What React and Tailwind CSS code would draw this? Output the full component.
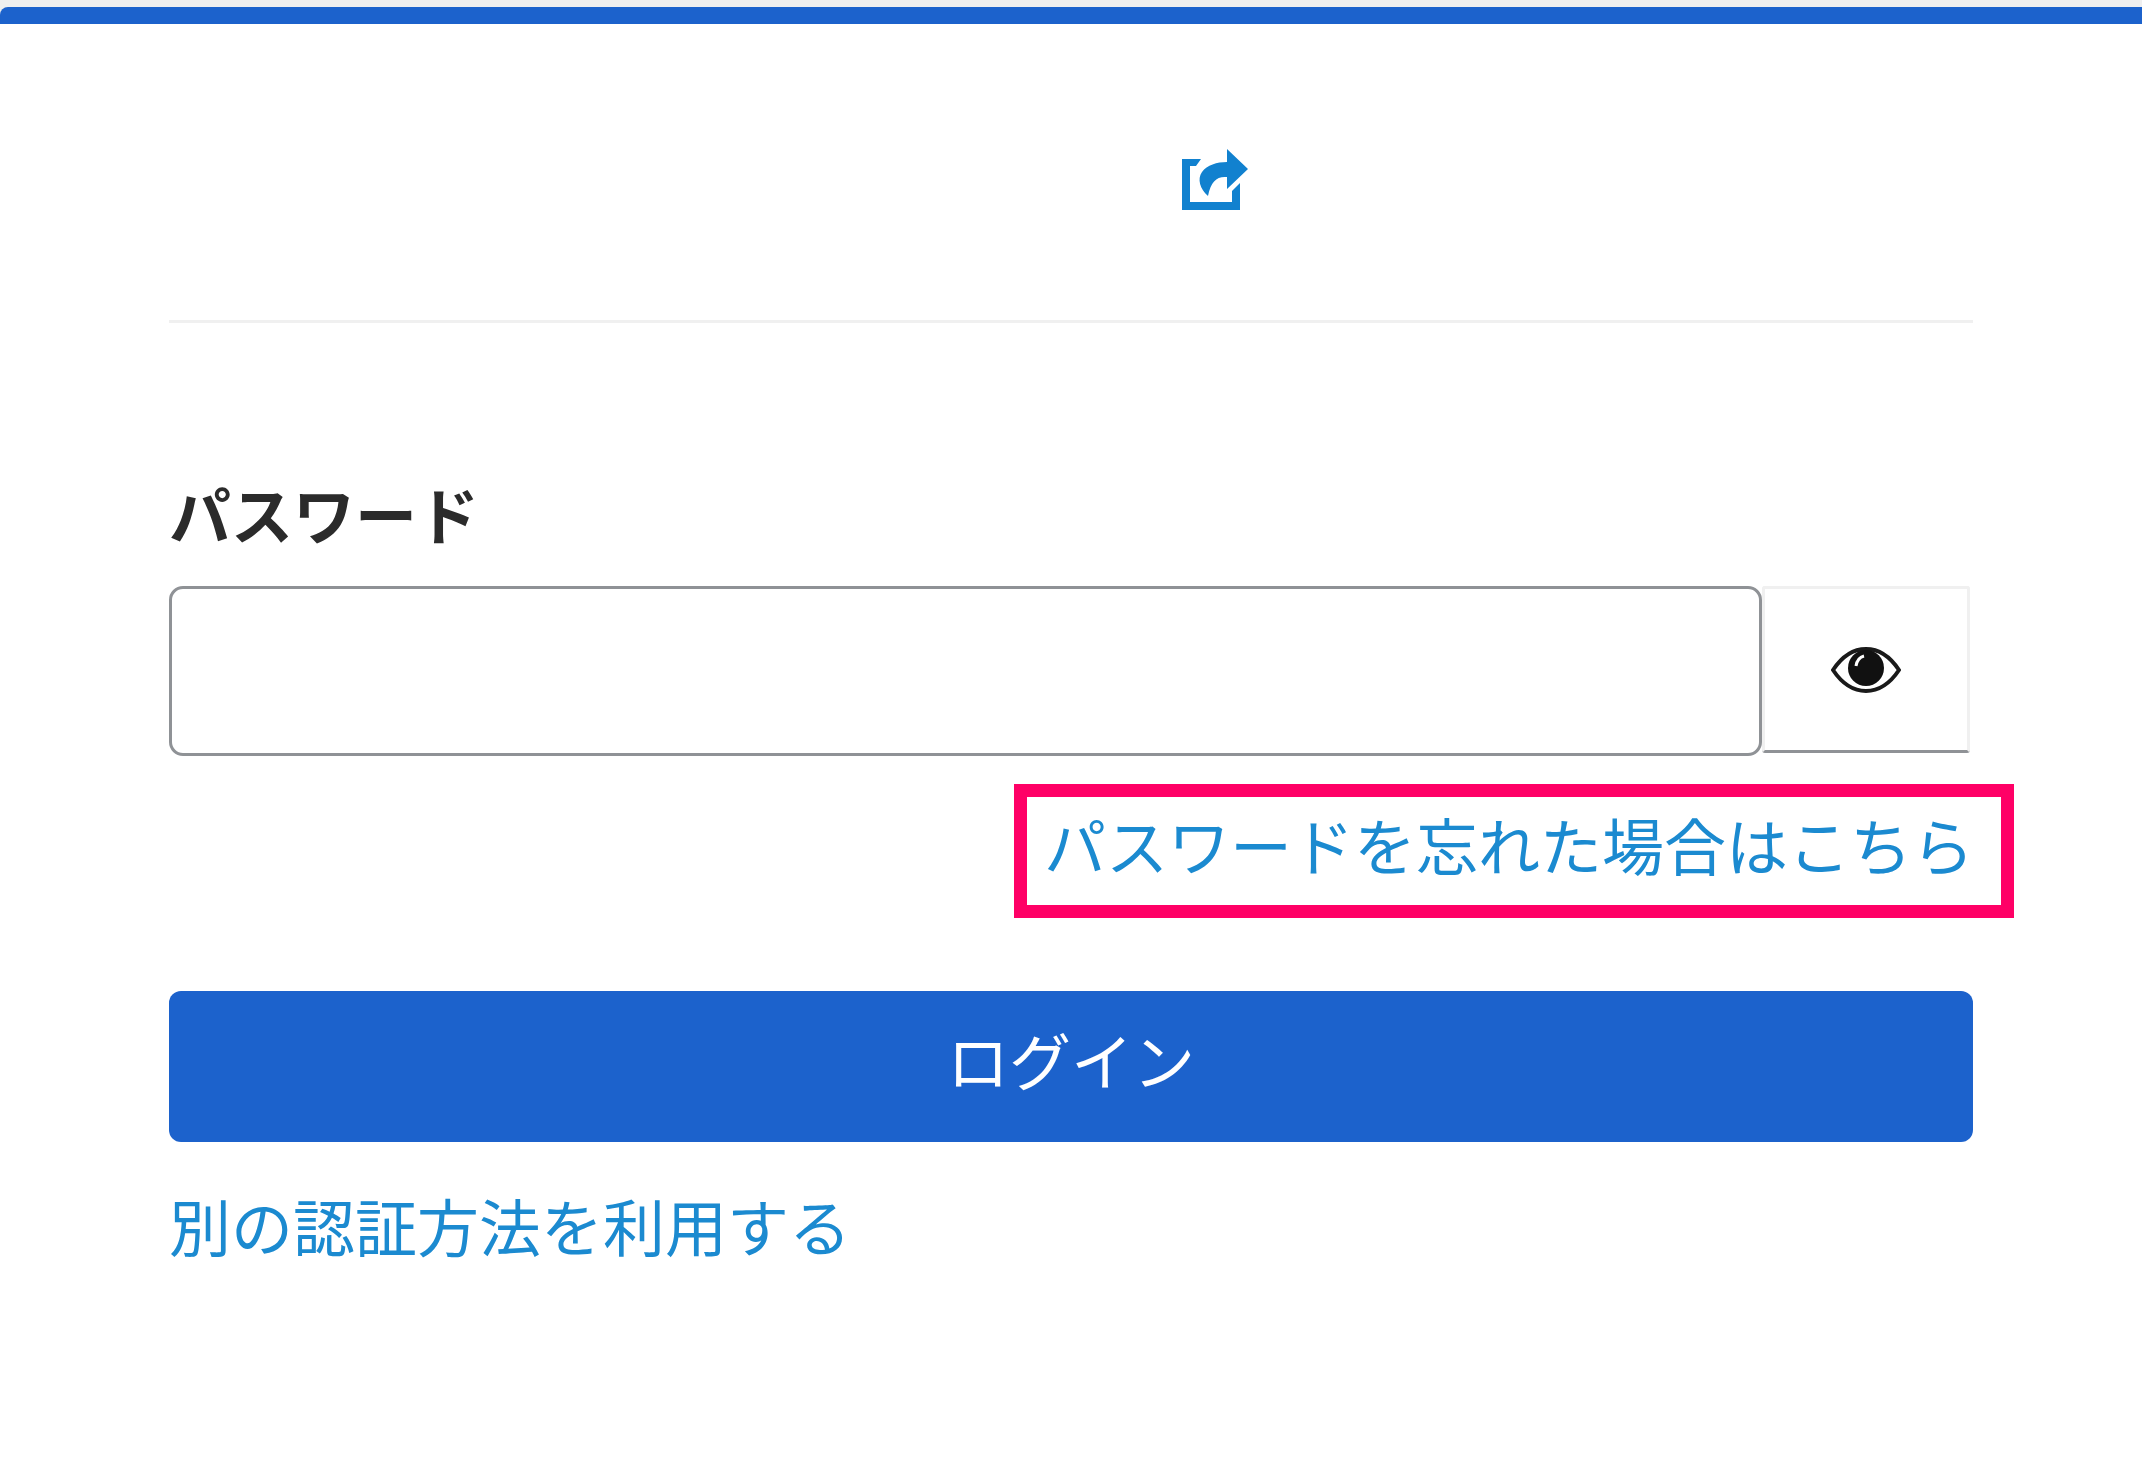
import React from 'react';

const FONT_STACK = "font-['Noto_Sans_CJK_JP','Noto_Sans',sans-serif]";

const ShareIcon = () => (
  <svg width="68" height="64" viewBox="0 0 68 64" className="block" fill="#1181cf">
    <path d="M0 10H19L14 17H8V53H50V42L58 34V61H0Z" />
    <path d="M45 0L66 20L45 40V28C35 27 29 32 26 47C18 40 15 30 20 23C25 16 35 13 45 13Z" />
  </svg>
);

const EyeIcon = () => (
  <svg width="70" height="46" viewBox="0 0 70 46" className="block">
    <path d="M2 23C12 8 24 2 35 2C46 2 58 8 68 23C58 38 46 44 35 44C24 44 12 38 2 23Z" fill="none" stroke="#1a1a1a" strokeWidth="4" />
    <circle cx="35" cy="21" r="18" fill="#111111" />
    <path d="M25 19C26 13 29 10 33 9" fill="none" stroke="#ffffff" strokeWidth="3" />
  </svg>
);

const App = () => {
  return (
    <div className={`min-h-[1465px] bg-[#efefef] ${FONT_STACK}`}>
      <div className="h-[7px]" />
      <div className="h-[17px] rounded-tl-[8px] bg-[#1c62cc]" />

      <div className="min-h-[1441px] bg-white px-[169px]">
        <header className="h-[299px] border-b-[3px] border-[#f0f0f0] pl-[1013px] pt-[125px]">
          <ShareIcon />
        </header>

        <form className="flex flex-col">
          <label className="mt-[159px] h-[68px] text-[62px] leading-[62px] font-semibold text-[#2b2b2b]">
            パスワード
          </label>

          <div className="mt-[36px] flex h-[170px]">
            <input
              type="password"
              className="flex-1 rounded-[14px] border-[3px] border-[#8f9296] bg-white px-6 outline-none"
            />
            <button
              type="button"
              className="mb-[3px] mr-[3px] flex w-[208px] items-center justify-center rounded-[3px] border-[3px] border-[#f0f0f0] border-b-[#8f9296] bg-white"
            >
              <EyeIcon />
            </button>
          </div>

          <div className="mt-[28px] flex justify-end">
            <a
              href="#forgot"
              className="-mr-[41px] flex h-[134px] w-[1000px] items-center justify-end border-[13px] border-[#ff0066] pb-[14px] pr-[27px] text-[62px] leading-none whitespace-nowrap text-[#1b8ad0]"
            >
              パスワードを忘れた場合はこちら
            </a>
          </div>

          <button
            type="submit"
            className="mt-[73px] h-[151px] rounded-[12px] bg-[#1c62cc] pb-[16px] text-[62px] leading-none text-white"
          >
            ログイン
          </button>

          <a
            href="#other"
            className="mt-[47px] h-[80px] text-[62px] leading-[72px] whitespace-nowrap text-[#1b8ad0]"
          >
            別の認証方法を利用する
          </a>
        </form>
      </div>
    </div>
  );
};

export default App;
